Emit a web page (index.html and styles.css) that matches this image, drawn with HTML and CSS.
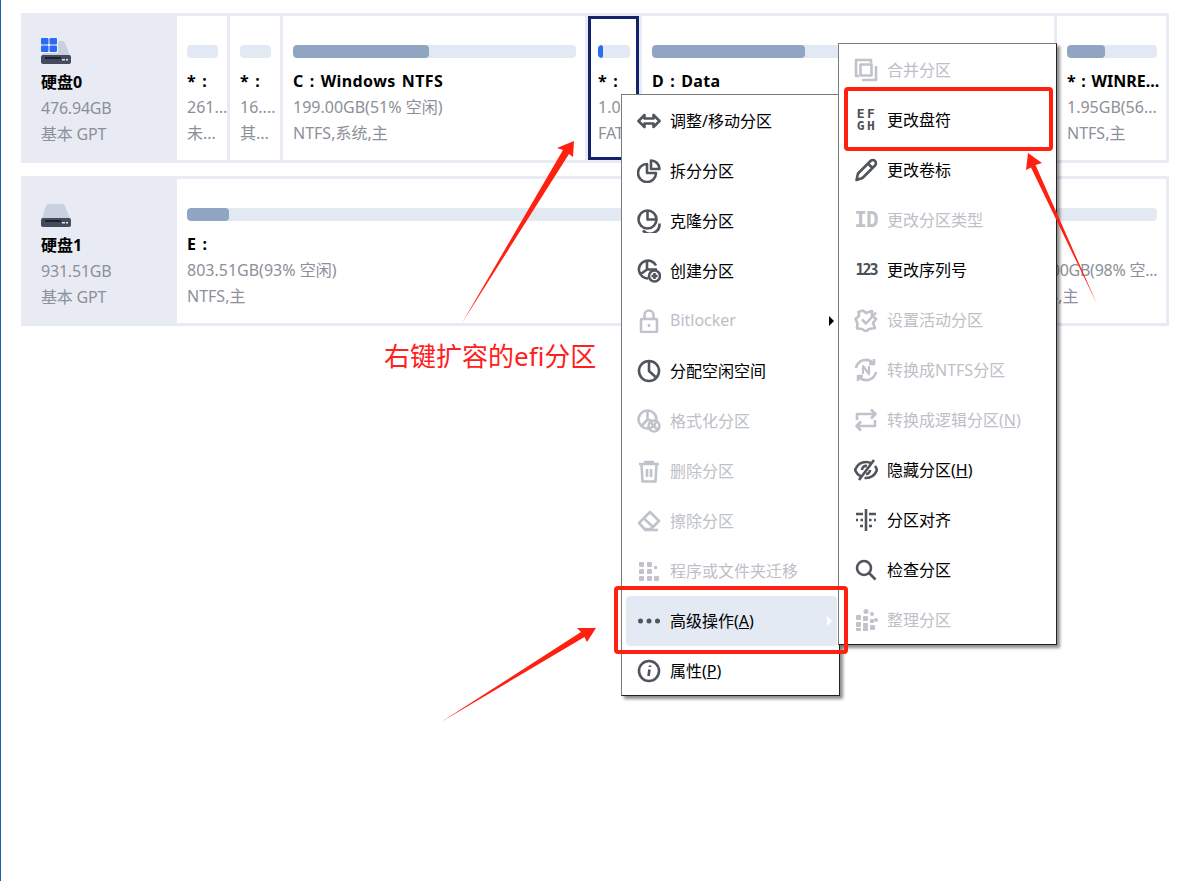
FILE: index.html
```html
<!DOCTYPE html>
<html lang="zh-CN">
<head>
<meta charset="utf-8">
<title>磁盘分区</title>
<link rel="stylesheet" href="styles.css">
</head>
<body>
<main class="page">
  <section class="disk">
    <div class="disk-info">
      <svg class="disk-icon" viewBox="0 0 30 26"><path d="M8 3h13a3 3 0 0 1 3 2l5.500 14H0.500L5 5a3 3 0 0 1 3-2z" fill="#c9d0e0"/><path d="M2 17h26a2 2 0 0 1 2 2v5a2 2 0 0 1-2 2H2a2 2 0 0 1-2-2v-5a2 2 0 0 1 2-2z" fill="#454b5e"/><rect x="4" y="19" width="16" height="2" fill="#1d2030"/><rect x="21" y="21" width="3" height="1.500" fill="#dfe3ec"/><rect x="25" y="21" width="2" height="1.500" fill="#dfe3ec"/><rect x="0" y="0" width="17" height="15" fill="#f3f5fa"/><rect x="0" y="0" width="7.500" height="6.500" rx="1" fill="#2a6af5"/><rect x="8.500" y="0" width="7.500" height="6.500" rx="1" fill="#2a6af5"/><rect x="0" y="7.500" width="7.500" height="6.500" rx="1" fill="#2a6af5"/><rect x="8.500" y="7.500" width="7.500" height="6.500" rx="1" fill="#2a6af5"/></svg>
      <div class="disk-name">硬盘0</div>
      <div class="sub">476.94GB</div>
      <div class="sub">基本 GPT</div>
    </div>
    <div class="part w50"><div class="bar"></div><div class="name">* :</div><div class="sub">261...</div><div class="sub">未...</div></div>
    <div class="part w50"><div class="bar"></div><div class="name">* :</div><div class="sub">16....</div><div class="sub">其...</div></div>
    <div class="part w302"><div class="bar"><div class="fill f49"></div></div><div class="name">C : Windows NTFS</div><div class="sub">199.00GB(51% 空闲)</div><div class="sub">NTFS,系统,主</div></div>
    <div class="part w51 selected"><div class="bar"><div class="fill blue"></div></div><div class="name">* :</div><div class="sub">1.0...</div><div class="sub">FAT...</div></div>
    <div class="part grow"><div class="bar"><div class="fill f39"></div></div><div class="name">D : Data</div></div>
    <div class="part w109"><div class="bar"><div class="fill f42"></div></div><div class="name tight-name">* : WINRE...</div><div class="sub">1.95GB(56...</div><div class="sub">NTFS,主</div></div>
  </section>

  <section class="disk">
    <div class="disk-info">
      <svg class="disk-icon" viewBox="0 0 30 26"><path d="M8 3h13a3 3 0 0 1 3 2l5.500 14H0.500L5 5a3 3 0 0 1 3-2z" fill="#c9d0e0"/><path d="M2 17h26a2 2 0 0 1 2 2v5a2 2 0 0 1-2 2H2a2 2 0 0 1-2-2v-5a2 2 0 0 1 2-2z" fill="#454b5e"/><rect x="4" y="19" width="16" height="2" fill="#1d2030"/><rect x="21" y="21" width="3" height="1.500" fill="#dfe3ec"/><rect x="25" y="21" width="2" height="1.500" fill="#dfe3ec"/></svg>
      <div class="disk-name">硬盘1</div>
      <div class="sub">931.51GB</div>
      <div class="sub">基本 GPT</div>
    </div>
    <div class="part grow"><div class="bar"><div class="fill f5"></div></div><div class="name">E :</div><div class="sub">803.51GB(93% 空闲)</div><div class="sub">NTFS,主</div></div>
    <div class="part w156"><div class="bar"><div class="fill f2"></div></div><div class="name">&nbsp;</div><div class="sub tight">128.00GB(98% 空...</div><div class="sub">NTFS,主</div></div>
  </section>
</main>

<ul class="menu menu-main">
  <li class="item"><svg class="ico" viewBox="0 0 24 24"><path d="M7.500 6 1.500 12l6 6v-3.500h9V18l6-6-6-6v3.500h-9z"/></svg><span>调整/移动分区</span></li>
  <li class="item"><svg class="ico" viewBox="0 0 24 24"><path d="M10 5a9 9 0 1 0 9 9h-9z"/><path d="M14 1.500a8.500 8.500 0 0 1 8.500 8.500H14z"/></svg><span>拆分分区</span></li>
  <li class="item"><svg class="ico" viewBox="0 0 24 24"><circle cx="10.500" cy="10.500" r="9"/><path d="M10.500 1.500v9h9"/><path d="M6 21.500a9.500 9.500 0 0 0 16.500-7"/></svg><span>克隆分区</span></li>
  <li class="item"><svg class="ico" viewBox="0 0 24 24"><path d="M11 19.500a9 9 0 1 1 8-13M10 1.500v9l-7 5M10 10.500h10"/><circle cx="17.500" cy="17" r="5.500"/><path d="M14.500 17h6M17.500 14v6"/></svg><span>创建分区</span></li>
  <li class="item off"><svg class="ico" viewBox="0 0 24 24"><rect x="4" y="10" width="16" height="13" rx="1"/><path d="M7.500 10V6a4.500 4.500 0 0 1 9 0v4"/><path d="M12 15v3"/></svg><span>Bitlocker</span><i class="caret"></i></li>
  <li class="item"><svg class="ico" viewBox="0 0 24 24"><circle cx="12" cy="12" r="10"/><path d="M12 2v10l6.500 6"/></svg><span>分配空闲空间</span></li>
  <li class="item off"><svg class="ico" viewBox="0 0 24 24"><circle cx="10.500" cy="10.500" r="9"/><path d="M10.500 1.500v9l-6 6.500M10.500 10.500l6 2"/><circle cx="17" cy="17" r="5.500"/><path d="m13 13 8 8"/></svg><span>格式化分区</span></li>
  <li class="item off"><svg class="ico" viewBox="0 0 24 24"><path d="M2 5h20M8 5V3h8v2M4.500 5.500l1 17h13l1-17M10 10v8M14 10v8"/></svg><span>删除分区</span></li>
  <li class="item off"><svg class="ico" viewBox="0 0 24 24"><path d="M2 14 13 3l9 9-8 8H7.500zM7 9.500l8.500 8"/><path d="M7 21h14"/></svg><span>擦除分区</span></li>
  <li class="item off"><svg class="ico solid" viewBox="0 0 24 24"><rect x="2" y="3" width="5" height="5" rx="1"/><rect x="10" y="3" width="5" height="5" rx="1"/><rect x="2" y="10" width="5" height="5" rx="1"/><rect x="10" y="10" width="5" height="5" rx="1"/><rect x="17" y="7" width="3" height="3"/><rect x="2" y="17" width="5" height="5" rx="1"/><rect x="10" y="17" width="5" height="5" rx="1"/><rect x="17" y="17" width="5" height="5" rx="1"/></svg><span>程序或文件夹迁移</span></li>
  <li class="item active"><svg class="ico solid" viewBox="0 0 24 24"><circle cx="3.500" cy="12" r="2.500"/><circle cx="12" cy="12" r="2.500"/><circle cx="20.500" cy="12" r="2.500"/></svg><span>高级操作(<u>A</u>)</span><i class="caret white"></i></li>
  <li class="item"><svg class="ico" viewBox="0 0 24 24"><circle cx="12" cy="12" r="10"/><path d="M12.500 10.500 11.500 17M13 6.500v1.500"/></svg><span>属性(<u>P</u>)</span></li>
</ul>

<ul class="menu menu-sub">
  <li class="item off"><svg class="ico" viewBox="0 0 24 24"><path d="M5 18H2V2h15v3"/><rect x="6.500" y="6.500" width="11" height="11"/><path d="M22 8v14H8"/></svg><span>合并分区</span></li>
  <li class="item"><span class="letters"><b>EF</b><b>GH</b></span><span>更改盘符</span></li>
  <li class="item"><svg class="ico" viewBox="0 0 24 24"><path d="M2.500 22 4 15.500 16.500 3a3 3 0 0 1 4.500 4.500L8.500 20zM14 5.500 19 10.500"/></svg><span>更改卷标</span></li>
  <li class="item off"><span class="letters big">ID</span><span>更改分区类型</span></li>
  <li class="item"><span class="letters mid">123</span><span>更改序列号</span></li>
  <li class="item off"><svg class="ico" viewBox="0 0 24 24"><path d="M9 2.500 12 5l6-2v5l4 3-3 4 2 5-6 1-3 2.500-4-2.500-5-.5.500-5L1.500 11 5 8l-.5-4z"/><path d="m8 11.500 4 4 10-11"/></svg><span>设置活动分区</span></li>
  <li class="item off"><svg class="ico" viewBox="0 0 24 24"><path d="M2 10a10 10 0 0 1 17-5M22 14a10 10 0 0 1-17 5M20 1v5h-5M4 23v-5h5"/><path class="n" d="M9 16V8l6 8V8"/></svg><span>转换成NTFS分区</span></li>
  <li class="item off"><svg class="ico" viewBox="0 0 24 24"><path d="M3 12V6h18M17 1.500 21.500 6 17 10.500M21 12v6H3M7 13.500 2.500 18 7 22.500"/></svg><span>转换成逻辑分区(<u>N</u>)</span></li>
  <li class="item"><svg class="ico" viewBox="0 0 24 24"><path d="M7 18.500C4 17 2 14.500 1 12c2-5 6-8 11-8 2 0 4 .5 5.500 1.500M21 8c1 1.200 1.500 2.500 2 4-2 5-6 8-11 8h-1.500"/><path d="M8 12a4 4 0 0 1 5-4M16 12a4 4 0 0 1-4 4M5 22 20 2"/></svg><span>隐藏分区(<u>H</u>)</span></li>
  <li class="item"><svg class="ico" viewBox="0 0 24 24"><path d="M12 1v22M2 6h7M2 12h2M6.500 12H9M6 18h3M15 6h7M15 12h2.500M20 12h2M15 18h3"/></svg><span>分区对齐</span></li>
  <li class="item"><svg class="ico" viewBox="0 0 24 24"><circle cx="10" cy="10" r="7"/><path d="m15 15 6.500 6.500"/></svg><span>检查分区</span></li>
  <li class="item off"><svg class="ico solid" viewBox="0 0 24 24"><circle cx="12" cy="3.500" r="2.500"/><circle cx="18" cy="6" r="2"/><circle cx="22" cy="12" r="2"/><rect x="2" y="7" width="5" height="5" rx="1"/><rect x="9" y="8" width="5" height="5" rx="1"/><rect x="16" y="11" width="4" height="4" rx="1"/><rect x="2" y="14" width="5" height="5" rx="1"/><rect x="2" y="20" width="5" height="3"/><rect x="9" y="15" width="5" height="5" rx="1"/><rect x="9" y="20" width="5" height="3"/><rect x="16" y="17" width="5" height="5" rx="1"/></svg><span>整理分区</span></li>
</ul>

<div class="mark mark-a"></div>
<div class="mark mark-b"></div>

<svg class="arrows" viewBox="0 0 1189 881">
  <polygon points="574,141 573,157 569,154 462,323 563,150 557,148"/>
  <polygon points="596,628 587,642 584.500,637 441,722 581,632 577,628"/>
  <polygon points="1028,153 1042,163 1035.500,165 1097,304 1031,167.500 1026,170"/>
</svg>

<p class="note">右键扩容的efi分区</p>
</body>
</html>
```
FILE: styles.css
```css
* { box-sizing: border-box; }
html, body { margin: 0; padding: 0; }
body {
  position: relative;
  width: 1189px;
  height: 881px;
  overflow: hidden;
  background: #fff;
  border-left: 1px solid #1a5fb8;
  font-family: "Noto Sans", "Noto Sans CJK SC", sans-serif;
  font-size: 16px;
  color: #000;
}

.page { display: flex; flex-direction: column; gap: 13px; padding: 13px 0 0 20px; width: 1168px; }
.disk { display: flex; gap: 3px; height: 150px; border: 3px solid #e8ebf3; background: #e8ebf3; }

.disk-info { width: 153px; flex: none; padding: 22px 0 0 17px; margin-right: -3px; }
.disk-info .sub { letter-spacing: -.2px; }
.disk-icon { display: block; width: 30px; height: 26px; margin-bottom: 5px; }
.disk-name { font-weight: 700; line-height: 26px; font-size: 16px; }
.sub { color: #8c9098; line-height: 26px; white-space: nowrap; overflow: hidden; }
.tight { letter-spacing: -.25px; }

.part { background: #fff; padding: 29px 0 0 10px; flex: none; overflow: hidden; }
.w50 { width: 50px; }
.w51 { width: 51px; }
.w109 { width: 109px; }
.w156 { width: 156px; }
.w302 { width: 302px; }
.grow { flex: 1; min-width: 0; }
.selected { border: 3px solid #12246c; padding: 26px 0 0 7px; }

.bar { height: 13px; margin-right: 9px; border-radius: 4px; background: #e3e9f3; overflow: hidden; }
.selected .bar { margin-right: 6px; }
.fill { height: 100%; background: #8fa5c2; border-radius: 4px; }
.blue { background: #2d6bf0; width: 5px; }
.f49 { width: 48%; }
.f39 { width: 39%; }
.f42 { width: 42%; }
.f5 { width: 5.200%; }
.f2 { width: 2%; }
.name { font-weight: 700; line-height: 26px; margin-top: 10px; white-space: nowrap; font-size: 16px; letter-spacing: .4px; word-spacing: 1.500px; }
.tight-name { letter-spacing: 0; }

.menu {
  position: absolute;
  width: 219px;
  height: 602px;
  margin: 0;
  padding: 1px 1px 0 1px;
  list-style: none;
  background: #fff;
  border: 1px solid #7b7b7b;
  border-right-color: #222;
  border-bottom-color: #222;
  box-shadow: 3px 3px 3px rgba(0, 0, 0, .45);
}
.menu-main { left: 620px; top: 94px; }
.menu-sub { left: 837px; top: 43px; }

.item { position: relative; display: flex; align-items: center; height: 50px; padding-left: 14px; white-space: nowrap; }
.item > span:not(.letters) { margin-left: 9px; padding-bottom: 2px; }
.off { color: #bdc0c6; }
.active { background: #e3eaf4; margin: 0 1px 0 3px; padding-left: 11px; border-radius: 4px; }

.ico { flex: none; width: 24px; height: 24px; fill: none; stroke: #50545b; stroke-width: 2.600; stroke-linejoin: round; }
.off .ico { stroke: #c0c3c9; }
.solid { stroke: none; fill: #50545b; }
.off .solid { stroke: none; fill: #c0c3c9; }
.ico .n { stroke-width: 2.200; }

.letters {
  flex: none;
  width: 24px;
  display: flex;
  flex-direction: column;
  align-items: center;
  font-family: "DejaVu Sans Mono", monospace;
  font-size: 13px;
  font-weight: 700;
  line-height: 12px;
  color: #4c5057;
}
.letters b { letter-spacing: 2.500px; margin-right: -2px; }
.big { font-size: 21px; line-height: 24px; color: #c0c3c9; letter-spacing: -1px; }
.mid { font-size: 15px; line-height: 24px; letter-spacing: -2px; }

.caret {
  position: absolute;
  right: 4px;
  top: 20px;
  border-left: 5px solid #000;
  border-top: 5px solid transparent;
  border-bottom: 5px solid transparent;
}
.caret.white { border-left-color: #fff; right: 5px; }

.mark { position: absolute; border: 4px solid #ff2010; border-radius: 4px; }
.mark-a { left: 613px; top: 586px; width: 234px; height: 68px; }
.mark-b { left: 843px; top: 87px; width: 209px; height: 64px; }

.arrows { position: absolute; left: -1px; top: 0; width: 1189px; height: 881px; pointer-events: none; }
.arrows polygon { fill: #ff2010; }

.note {
  position: absolute;
  left: 383px;
  top: 338px;
  margin: 0;
  font-size: 26px;
  line-height: 36px;
  color: #ff2020;
  white-space: nowrap;
}
```
